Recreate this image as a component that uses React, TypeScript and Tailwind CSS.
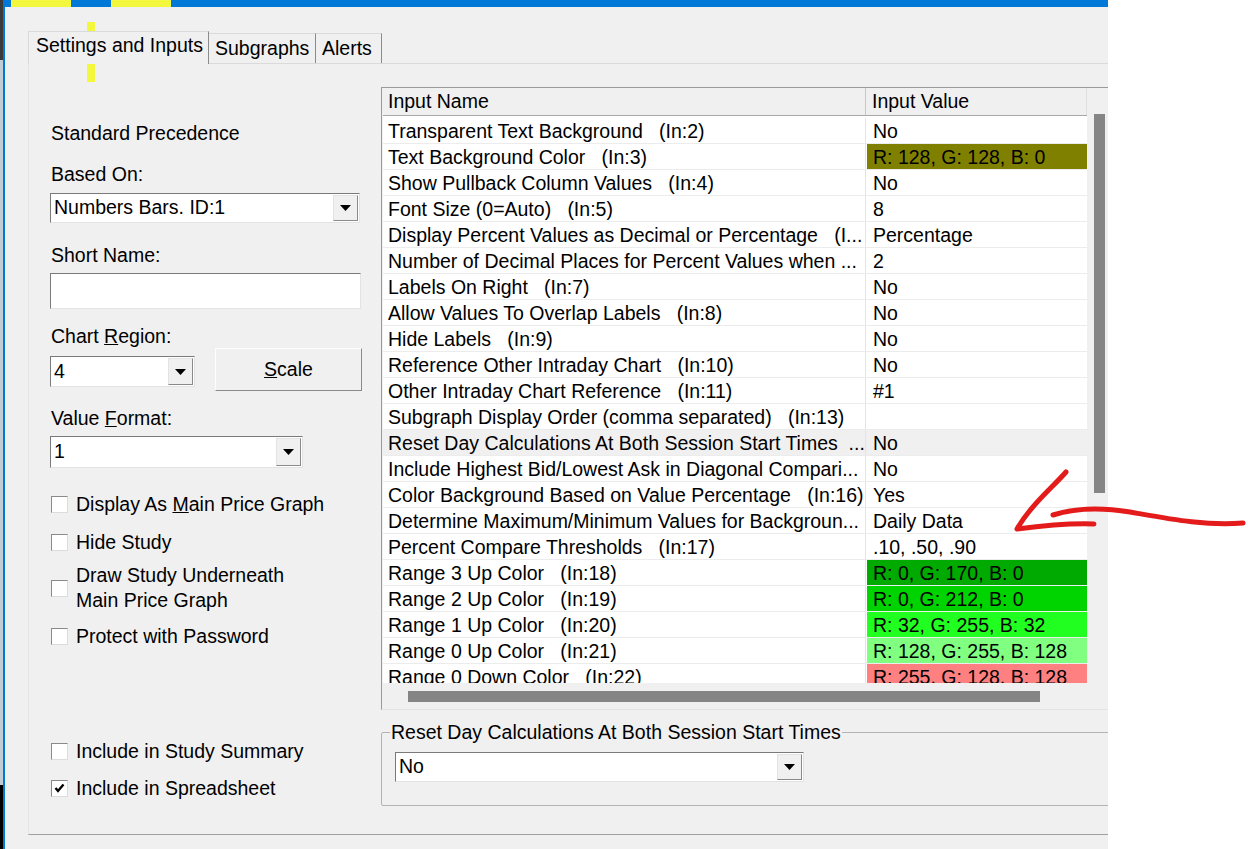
import React from 'react';

type Row = { name: string; value: string; color?: string; selected?: boolean };

const rows: Row[] = [
  { name: 'Transparent Text Background   (In:2)', value: 'No' },
  { name: 'Text Background Color   (In:3)', value: 'R: 128, G: 128, B: 0', color: 'bg-[#808000]' },
  { name: 'Show Pullback Column Values   (In:4)', value: 'No' },
  { name: 'Font Size (0=Auto)   (In:5)', value: '8' },
  { name: 'Display Percent Values as Decimal or Percentage   (I...', value: 'Percentage' },
  { name: 'Number of Decimal Places for Percent Values when ...', value: '2' },
  { name: 'Labels On Right   (In:7)', value: 'No' },
  { name: 'Allow Values To Overlap Labels   (In:8)', value: 'No' },
  { name: 'Hide Labels   (In:9)', value: 'No' },
  { name: 'Reference Other Intraday Chart   (In:10)', value: 'No' },
  { name: 'Other Intraday Chart Reference   (In:11)', value: '#1' },
  { name: 'Subgraph Display Order (comma separated)   (In:13)', value: '' },
  { name: 'Reset Day Calculations At Both Session Start Times  ...', value: 'No', selected: true },
  { name: 'Include Highest Bid/Lowest Ask in Diagonal Compari...', value: 'No' },
  { name: 'Color Background Based on Value Percentage   (In:16)', value: 'Yes' },
  { name: 'Determine Maximum/Minimum Values for Backgroun...', value: 'Daily Data' },
  { name: 'Percent Compare Thresholds   (In:17)', value: '.10, .50, .90' },
  { name: 'Range 3 Up Color   (In:18)', value: 'R: 0, G: 170, B: 0', color: 'bg-[#00aa00]' },
  { name: 'Range 2 Up Color   (In:19)', value: 'R: 0, G: 212, B: 0', color: 'bg-[#00d400]' },
  { name: 'Range 1 Up Color   (In:20)', value: 'R: 32, G: 255, B: 32', color: 'bg-[#20ff20]' },
  { name: 'Range 0 Up Color   (In:21)', value: 'R: 128, G: 255, B: 128', color: 'bg-[#80ff80]' },
  { name: 'Range 0 Down Color   (In:22)', value: 'R: 255, G: 128, B: 128', color: 'bg-[#ff8080]' },
];

// combo box with the little down-arrow button
const Combo: React.FC<{ value: string; className: string }> = ({ value, className }) => (
  <div className={`flex bg-white border border-t-[#7a7a7a] border-l-[#7a7a7a] border-b-[#e3e3e3] border-r-[#e3e3e3] ${className}`}>
    <div className="flex-1 pl-[3px] flex items-center whitespace-nowrap">{value}</div>
    <div className="w-[25px] my-[1px] mr-[1px] bg-[#f0f0f0] border border-t-[#e3e3e3] border-l-[#e3e3e3] border-b-[#8a8a8a] border-r-[#8a8a8a] flex items-center justify-center">
      <svg width="11" height="6" viewBox="0 0 11 6">
        <path d="M0 0 L11 0 L5.5 6 Z" fill="#000" />
      </svg>
    </div>
  </div>
);

const Check: React.FC<{ checked?: boolean; className?: string; children: React.ReactNode; tall?: boolean }> = ({
  checked,
  className = '',
  children,
  tall,
}) => (
  <div className={`flex items-center pl-[1px] ${className}`}>
    <div className="w-[17px] h-[17px] bg-white border border-t-[#8a8a8a] border-l-[#8a8a8a] border-b-[#dcdcdc] border-r-[#dcdcdc] flex items-center justify-center shrink-0">
      {checked && (
        <svg width="11" height="10" viewBox="0 0 11 10">
          <path d="M1.5 5 L4 8 L9.5 1.5" stroke="#000" strokeWidth="2.4" fill="none" />
        </svg>
      )}
    </div>
    <div className={`ml-[8px] ${tall ? 'leading-[25px]' : 'leading-[22px]'}`}>{children}</div>
  </div>
);

export default function App() {
  return (
    <div className="relative w-[1248px] h-[849px] overflow-hidden bg-white flex text-[19.5px] text-black font-['Liberation_Sans',Arial,sans-serif]">
      {/* desktop strip at the very left */}
      <div className="w-[3px] flex flex-col">
        <div className="h-[60px] bg-[#3a3a3a]" />
        <div className="flex-1 bg-[#c3cbd3]" />
        <div className="h-[64px] bg-black" />
      </div>

      {/* dialog window */}
      <div className="w-[1105px] h-full bg-[#f0f0f0] border-l-2 border-[#0078d7] flex flex-col overflow-hidden">
        <div className="h-[7px] bg-[#0078d7] flex shrink-0">
          <div className="ml-[6px] w-[60px] bg-[#f3f73e]" />
          <div className="ml-[40px] w-[60px] bg-[#f3f73e]" />
        </div>

        {/* tabs */}
        <div className="flex items-end mt-[23px] ml-[23px] h-[33px] relative z-10">
          <div className="h-[33px] w-[181px] bg-[#f0f0f0] border-t border-l border-t-[#dadada] border-l-[#dadada] border-r border-r-[#8a8a8a] pl-[7px] pt-[2px] leading-[22px] mb-[-1px] relative">
            Settings and Inputs
          </div>
          <div className="h-[30px] w-[107px] border-t border-t-[#dadada] border-r border-r-[#8a8a8a] pl-[6px] pt-[3px] leading-[22px]">
            Subgraphs
          </div>
          <div className="h-[30px] w-[66px] border-t border-t-[#dadada] border-r border-r-[#8a8a8a] pl-[6px] pt-[3px] leading-[22px]">
            Alerts
          </div>
        </div>

        {/* tab page */}
        <div className="ml-[23px] w-[1200px] h-[772px] border-t border-l border-t-[#dadada] border-l-[#e4e4e4] border-b border-b-[#a0a0a0] flex">
          {/* left column */}
          <div className="w-[352px] pl-[21px] flex flex-col">
            <div className="mt-[58px] h-[22px] leading-[22px] pl-[1px]">Standard Precedence</div>
            <div className="mt-[19px] h-[22px] leading-[22px] pl-[1px]">Based On:</div>
            <Combo value="Numbers Bars. ID:1" className="mt-[8px] h-[30px] w-[310px]" />
            <div className="mt-[21px] h-[22px] leading-[22px] pl-[1px]">Short Name:</div>
            <div className="mt-[7px] h-[36px] w-[311px] bg-white border border-t-[#7a7a7a] border-l-[#7a7a7a] border-b-[#e3e3e3] border-r-[#e3e3e3]" />
            <div className="mt-[16px] h-[22px] leading-[22px] pl-[1px]">
              Chart <span className="underline">R</span>egion:
            </div>
            <div className="mt-[1px] h-[43px] flex">
              <Combo value="4" className="mt-[8px] h-[31px] w-[145px]" />
              <div className="ml-[20px] w-[147px] h-[43px] bg-[#f0f0f0] border border-t-[#fdfdfd] border-l-[#fdfdfd] border-b-[#8a8a8a] border-r-[#8a8a8a] flex items-center justify-center">
                <span>
                  <span className="underline">S</span>cale
                </span>
              </div>
            </div>
            <div className="mt-[16px] h-[22px] leading-[22px] pl-[1px]">
              Value <span className="underline">F</span>ormat:
            </div>
            <Combo value="1" className="mt-[7px] h-[32px] w-[253px]" />

            <Check className="mt-[25px] h-[22px]">
              Display As <span className="underline">M</span>ain Price Graph
            </Check>
            <Check className="mt-[16px] h-[22px]">Hide Study</Check>
            <Check className="mt-[10px] h-[50px]" tall>
              Draw Study Underneath
              <br />
              Main Price Graph
            </Check>
            <Check className="mt-[12px] h-[22px]">Protect with Password</Check>
            <Check className="mt-[93px] h-[22px]">Include in Study Summary</Check>
            <Check className="mt-[15px] h-[22px]" checked>
              Include in Spreadsheet
            </Check>
          </div>

          {/* right column */}
          <div className="flex flex-col">
            <div className="mt-[23px] w-[727px] h-[623px] border-t border-l border-[#9a9a9a] border-b border-b-[#e3e3e3] flex flex-col">
              <div className="flex h-[595px]">
                <div className="w-[704px] ml-[1px] flex flex-col bg-white">
                  <div className="h-[28px] bg-[#f0f0f0] border-b border-[#a8a8a8] flex leading-[27px]">
                    <div className="w-[483px] pl-[5px] border-r border-[#c8c8c8]">Input Name</div>
                    <div className="flex-1 pl-[6px] border-r border-[#e0e0e0]">Input Value</div>
                  </div>
                  <div className="flex-1 overflow-hidden pt-[2px]">
                    {rows.map((r) => (
                      <div
                        key={r.name}
                        className={`h-[26px] flex border-b border-[#ececec] ${r.selected ? 'bg-[#f0f0f0]' : ''}`}
                      >
                        <div className="w-[483px] pl-[5px] border-r border-[#e4e4e4] whitespace-pre overflow-hidden leading-[27px]">
                          {r.name}
                        </div>
                        <div className="flex-1 pl-[1px]">
                          <div className={`h-[25px] pl-[6px] leading-[27px] whitespace-nowrap overflow-hidden ${r.color ?? ''}`}>
                            {r.value}
                          </div>
                        </div>
                      </div>
                    ))}
                  </div>
                </div>
                {/* vertical scrollbar */}
                <div className="w-[21px] bg-[#f0f0f0] pl-[7px] pt-[26px]">
                  <div className="w-[11px] h-[379px] bg-[#858585]" />
                </div>
              </div>
              {/* horizontal scrollbar */}
              <div className="flex-1 bg-[#f0f0f0] pl-[26px] pt-[8px]">
                <div className="w-[632px] h-[11px] bg-[#858585]" />
              </div>
            </div>

            <fieldset className="mt-[12px] w-[760px] border border-[#b4b4b4] rounded-[2px] pb-[23px]">
              <legend className="ml-[8px] px-[1px] leading-[20px]">Reset Day Calculations At Both Session Start Times</legend>
              <Combo value="No" className="ml-[13px] mt-[10px] h-[30px] w-[409px]" />
            </fieldset>
          </div>
        </div>
      </div>

      {/* highlighter mark over the tab caption */}
      <div className="absolute left-[87px] top-[22px] w-[8px] h-[60px] bg-[#f3f73e]" />

      {/* hand drawn red arrow */}
      <svg className="absolute left-0 top-0 pointer-events-none" width="1248" height="849" viewBox="0 0 1248 849">
        <path
          d="M1066 472 C1052 488 1030 506 1017 529 C1040 526 1066 523 1094 524"
          stroke="#e31b1b"
          strokeWidth="5"
          fill="none"
          strokeLinecap="round"
          strokeLinejoin="round"
        />
        <path
          d="M1053 515 C1075 508 1100 507 1130 512 C1170 519 1205 526 1243 523"
          stroke="#e31b1b"
          strokeWidth="5"
          fill="none"
          strokeLinecap="round"
        />
      </svg>
    </div>
  );
}
